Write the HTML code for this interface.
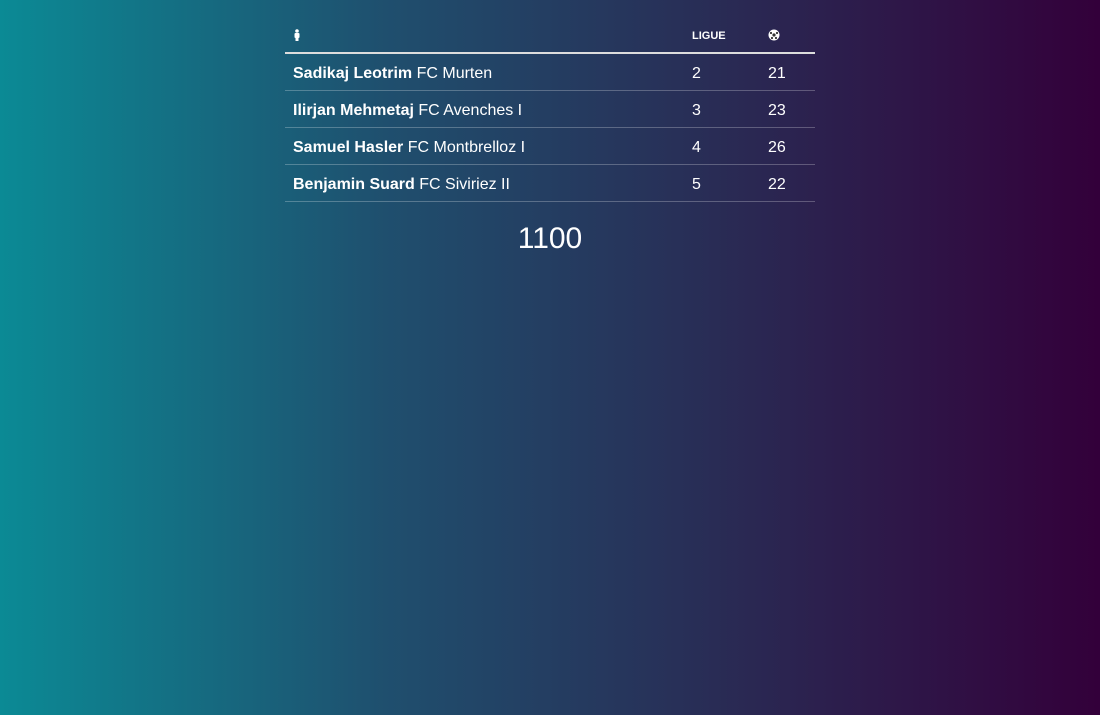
<!DOCTYPE html>
<html><head><meta charset="utf-8"><style>
html,body{margin:0;height:715px;width:1100px;overflow:hidden}
body{background:linear-gradient(to right,#0b8a95 0%,#1f4f6e 35%,#292c55 65%,#33003a 100%);font-family:"Liberation Sans",sans-serif;color:#fff}
table{position:absolute;left:285px;top:24px;width:530px;border-collapse:collapse;table-layout:fixed}
th{height:24px;text-align:left;font-size:11px;font-weight:bold;padding:0 8px 4px;border-bottom:2px solid #ddd;vertical-align:middle}
td{height:37px;font-size:16px;padding:4px 8px 0;box-sizing:border-box;border-bottom:1px solid rgba(255,255,255,.25)}
.c1{width:383px}.c2{width:60px}.c3{width:39px}
.num{position:absolute;top:222px;left:0;width:1100px;text-align:center;font-size:30px;font-weight:300}
</style></head><body>
<table>
<tr><th class="c1"><svg width="8" height="12" viewBox="0 0 8 12"><circle cx="4" cy="2" r="1.8" fill="#fff"/><rect x="1.5" y="4" width="5" height="5" rx="1" fill="#fff"/><rect x="2.5" y="8" width="3" height="4" fill="#fff"/></svg></th><th class="c2">LIGUE</th><th class="c3"><svg width="12" height="12" viewBox="0 0 12 12"><circle cx="6" cy="6" r="5.5" fill="#fff"/><circle cx="6" cy="6" r="1.6" fill="#333"/><circle cx="3" cy="4" r="1.1" fill="#333"/><circle cx="9" cy="4" r="1.1" fill="#333"/><circle cx="4" cy="9" r="1.1" fill="#333"/><circle cx="8" cy="9" r="1.1" fill="#333"/></svg></th></tr>
<tr><td><b>Sadikaj Leotrim</b> FC Murten</td><td>2</td><td>21</td></tr>
<tr><td><b>Ilirjan Mehmetaj</b> FC Avenches I</td><td>3</td><td>23</td></tr>
<tr><td><b>Samuel Hasler</b> FC Montbrelloz I</td><td>4</td><td>26</td></tr>
<tr><td><b>Benjamin Suard</b> FC Siviriez II</td><td>5</td><td>22</td></tr>
</table>
<div class="num">1100</div>
</body></html>
